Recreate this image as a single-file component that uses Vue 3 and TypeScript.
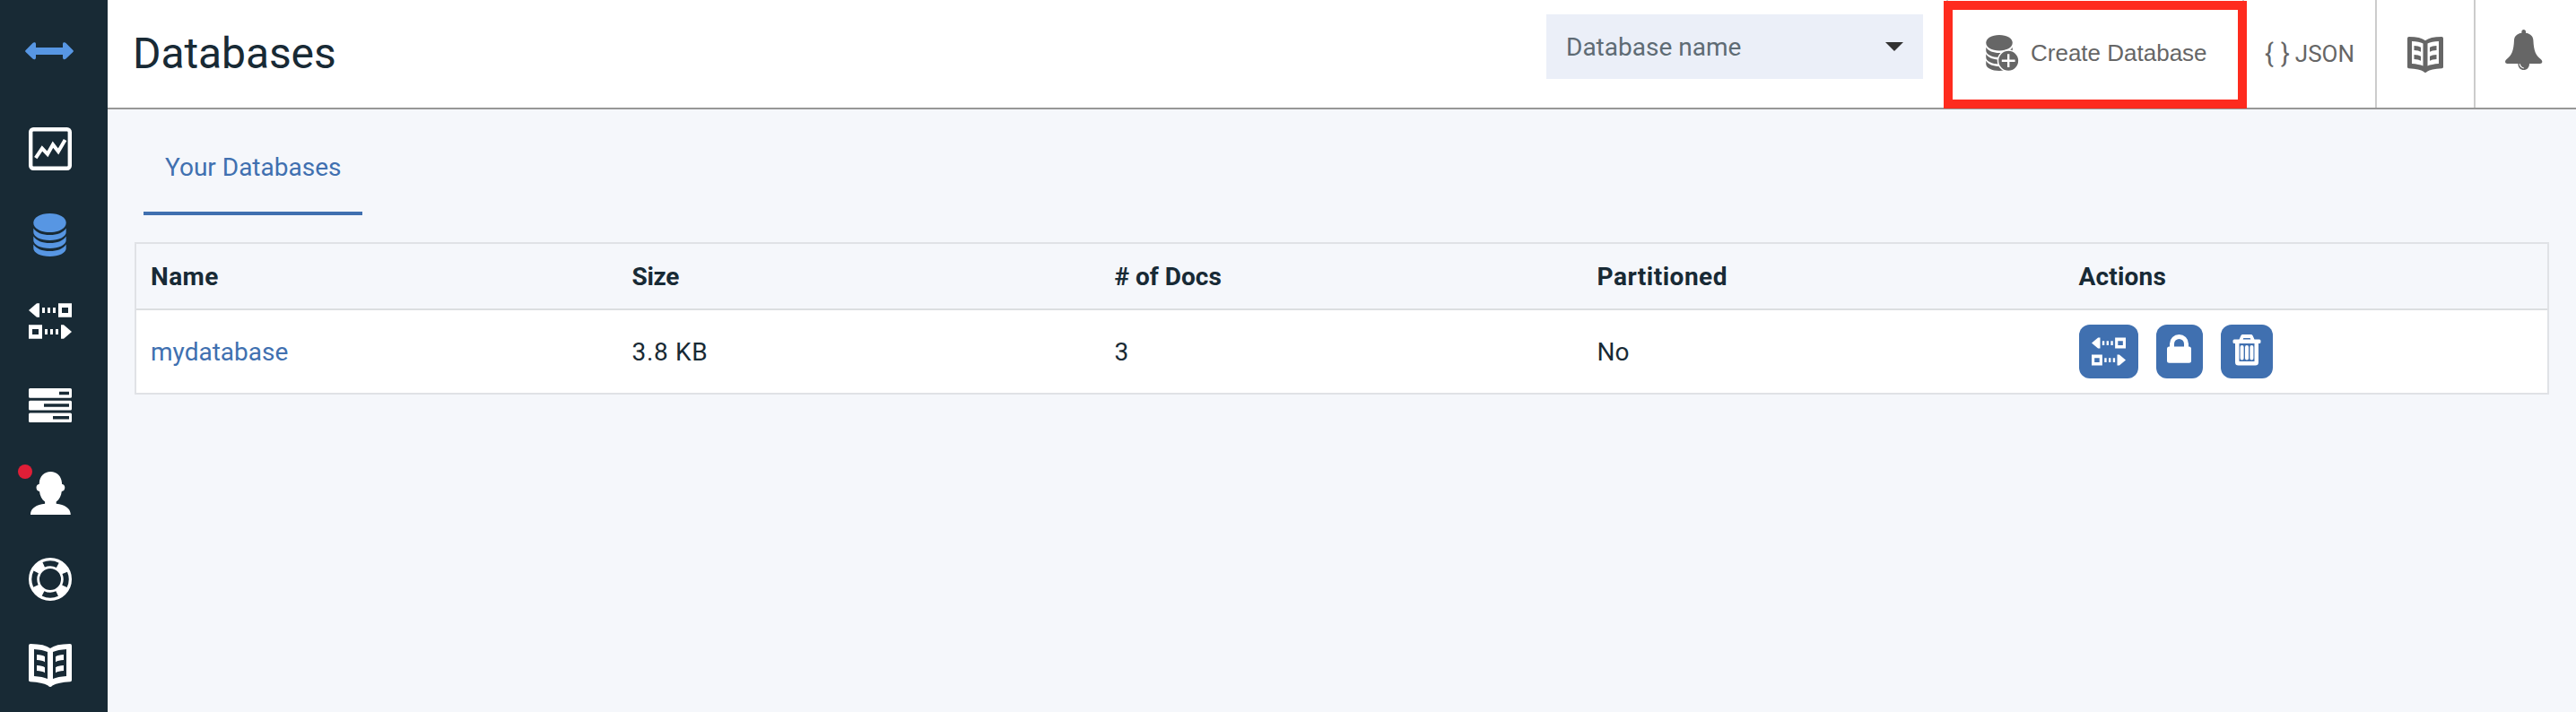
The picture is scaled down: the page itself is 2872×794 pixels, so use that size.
<script setup lang="ts">
interface NavItem {
  id: string
  width: number
  height: number
  active?: boolean
  alert?: boolean
}

interface Database {
  name: string
  size: string
  docs: number
  partitioned: boolean
}

const navItems: NavItem[] = [
  { id: 'monitoring', width: 48, height: 48 },
  { id: 'database', width: 37, height: 48, active: true },
  { id: 'replication', width: 48, height: 40 },
  { id: 'tasks', width: 48, height: 38 },
  { id: 'account', width: 45, height: 48, alert: true },
  { id: 'support', width: 48, height: 48 },
  { id: 'book', width: 48, height: 48 },
]

const databases: Database[] = [
  { name: 'mydatabase', size: '3.8 KB', docs: 3, partitioned: false },
]
</script>

<template>
  <div class="app">
    <svg class="sprite" width="0" height="0" aria-hidden="true">
      <symbol id="monitoring" viewBox="0 0 48 48">
        <rect x="2.2" y="2.2" width="43.6" height="43.6" rx="3" fill="none" stroke="currentColor" stroke-width="4.4" />
        <path d="M7.8 34.2 15 23.5l6 6.3 6-10.6 6 7.8 7.6-13" fill="none" stroke="currentColor" stroke-width="4" />
      </symbol>
      <symbol id="database" viewBox="0 0 37 48">
        <g fill="currentColor">
          <path d="M.3 10.5C.3 4.5 8 0 18.5 0s18.2 4.500 18.200 10.500S29 21 18.500 21 .3 16.500.3 10.500Z" />
          <path d="M.3 16.500C3.500 21.500 10 24 18.500 24s15-2.500 18.200-7.500v4.500C36.700 26 28.500 30 18.500 30S.3 26 .3 21Z" />
          <path d="M.3 25.500C3.500 30.500 10 33 18.500 33s15-2.500 18.200-7.500v4.500C36.700 35 28.500 39 18.500 39S.3 35 .3 30Z" />
          <path d="M.3 34.500C3.500 39.500 10 42 18.500 42s15-2.500 18.200-7.500v4.500C36.700 44 28.500 48 18.500 48S.3 44 .3 39Z" />
        </g>
      </symbol>
      <symbol id="replication" viewBox="0 0 48 40">
        <g fill="currentColor">
          <path d="M0 8 9 .3h3v15.400H9Z" />
          <path d="M15 5h3v6h-3ZM21 5h3v6h-3ZM27 5h3v6h-3Z" />
          <path fill-rule="evenodd" d="M33 .3h15v15.400H33ZM37 5v6h7V5Z" />
          <path fill-rule="evenodd" d="M0 24.300h15v15.400H0ZM4 29v6h7v-6Z" />
          <path d="M18 29h3v6h-3ZM24 29h3v6h-3ZM30 29h3v6h-3Z" />
          <path d="m48 32-9-7.700h-3v15.400h3Z" />
        </g>
      </symbol>
      <symbol id="tasks" viewBox="0 0 48 38">
        <g fill="currentColor" fill-rule="evenodd">
          <path d="M1.500 0h45Q48 0 48 1.500v7.700q0 1.500-1.500 1.500h-45Q0 10.700 0 9.200V1.500Q0 0 1.500 0ZM34 3.700V7.200H45V3.700Z" />
          <path d="M1.500 13.800h45q1.500 0 1.500 1.500v7.700q0 1.500-1.500 1.500h-45Q0 24.500 0 23v-7.700q0-1.500 1.500-1.500ZM17 17.300v3.500H45v-3.500Z" />
          <path d="M1.500 27.400h45q1.500 0 1.500 1.500v7.600q0 1.500-1.500 1.500h-45Q0 38 0 36.500v-7.600q0-1.500 1.500-1.500ZM27 31v3.500H45V31Z" />
        </g>
      </symbol>
      <symbol id="account" viewBox="0 0 45 48">
        <path
          fill="currentColor"
          d="M22.400 0C29.500 0 34.500 5 35 12.500v1.300c2 .3 3.300 1.800 3.300 3.900 0 2.300-1.400 4-3.500 4.300-.5 5-2.800 9.200-6.100 11.500v2.200C38 36.500 44.400 41 44.700 47v1H0v-1C.3 41 6.800 36.500 16.100 35.700v-2.200C12.800 31.200 10.500 27 10 22c-2.100-.3-3.500-2-3.500-4.300 0-2.100 1.300-3.600 3.300-3.900v-1.300C10.300 5 15.300 0 22.400 0Z"
        />
      </symbol>
      <symbol id="support" viewBox="0 0 48 48">
        <circle cx="24" cy="24" r="18" fill="none" stroke="currentColor" stroke-width="12" />
        <circle class="cutout" cx="24" cy="24" r="17.750" fill="none" stroke-width="6" stroke-dasharray="16.100 11.780" stroke-dashoffset="8.050" />
      </symbol>
      <symbol id="book" viewBox="0 0 48 48">
        <g fill="currentColor">
          <path
            fill-rule="evenodd"
            d="M2 0Q18 .2 24 5 30 .2 46 0q2 0 2 2v38.500q0 1.500-1.700 1.700Q31 43.300 26.500 46.500 25 48 24 48t-2.500-1.500Q17 43.300 1.700 42.200 0 42 0 40.500V2Q0 0 2 0ZM6 6v30q9.500.6 15 3V9Q15.500 6.500 6 6ZM42 6q-9.500.5-15 3v30q5.500-2.400 15-3Z"
          />
          <path d="M9 12q6 .2 9 2.200v6Q15 18.200 9 18ZM9 24q6 .2 9 2.200v6Q15 30.200 9 30ZM39 12q-6 .2-9 2.200v6q3-2 9-2.200ZM39 24q-6 .2-9 2.200v6q3-2 9-2.200Z" />
        </g>
      </symbol>
    </svg>

    <nav class="sidebar">
      <a class="brand">
        <svg width="54" height="20" viewBox="0 0 54 20">
          <path
            fill="currentColor"
            d="M.6 8.900 8.500 1Q9.600 0 10.800.3 12 .6 12 2v4h30V2q0-1.400 1.200-1.700Q44.400 0 45.500 1l7.900 7.900q1 1 0 2L45.500 18.500q-1.100 1-2.300.7Q42 18.900 42 17.500V14H12v3.500q0 1.400-1.200 1.700-1.200.3-2.300-.7L.6 10.900q-1-1 0-2Z"
          />
        </svg>
      </a>
      <a v-for="item in navItems" :key="item.id" class="nav-item" :class="[item.id, { active: item.active }]">
        <svg :width="item.width" :height="item.height"><use :href="'#' + item.id" /></svg>
        <span v-if="item.alert" class="alert-dot"></span>
      </a>
    </nav>

    <main class="content">
      <header class="topbar">
        <h1>Databases</h1>
        <div class="db-select">
          <span class="placeholder">Database name</span>
          <i class="caret"></i>
        </div>
        <button class="cell create">
          <svg width="37" height="40" viewBox="0 0 37 40">
            <svg width="30" height="40" viewBox="0 0 37 48" preserveAspectRatio="none"><use href="#database" /></svg>
            <circle cx="25.200" cy="28.700" r="11.700" fill="currentColor" stroke="#fff" stroke-width="1.500" />
            <path d="M17.800 28.700h14.800M25.200 21.300v14.800" stroke="#fff" stroke-width="2.400" />
          </svg>
          <span>Create Database</span>
          <i class="highlight"></i>
        </button>
        <button class="cell json"><span class="braces">{ }</span><span>JSON</span></button>
        <button class="cell docs">
          <svg width="40" height="40"><use href="#book" /></svg>
        </button>
        <button class="cell bell">
          <svg width="42" height="45" viewBox="0 0 42 45">
            <path
              fill="currentColor"
              d="M20.700 0c1.400 0 2.300 1 2.300 2.200v1.600c5 .7 8.200 3.700 8.400 8.200.5 11.500 2.600 16.500 8.300 21 1.500 1.200 1.800 2.400 1.500 3.500-.3 1-1 1.400-2.200 1.400H27c0 4.200-2.700 7.100-6.300 7.100s-6.300-2.900-6.300-7.100h-12C1.200 37.900.5 37.500.2 36.500c-.3-1.100 0-2.300 1.500-3.500C7.400 28.500 9.500 23.500 10 12c.2-4.500 3.400-7.500 8.400-8.200V2.200C18.400 1 19.300 0 20.700 0Z"
            />
            <path d="M16.300 38.300q.5 4 4.500 4.700" fill="none" stroke="#fff" stroke-width="1.200" />
          </svg>
        </button>
      </header>

      <section class="page">
        <div class="tabs"><a class="tab">Your Databases</a></div>

        <div class="table">
          <div class="row head">
            <span class="name">Name</span>
            <span class="size">Size</span>
            <span># of Docs</span>
            <span class="part">Partitioned</span>
            <span class="acts">Actions</span>
          </div>
          <div v-for="db in databases" :key="db.name" class="row">
            <a class="link">{{ db.name }}</a>
            <span class="num">{{ db.size }}</span>
            <span>{{ db.docs }}</span>
            <span>{{ db.partitioned ? 'Yes' : 'No' }}</span>
            <div class="actions">
              <button class="action replicate">
                <svg width="38" height="32"><use href="#replication" /></svg>
              </button>
              <button class="action lock">
                <svg width="27" height="32" viewBox="0 0 27 32">
                  <path d="M5.500 16V10.500a8 8 0 0 1 16 0V16" fill="none" stroke="#fff" stroke-width="5" />
                  <rect y="13.500" width="27" height="18.300" rx="2.500" fill="#fff" />
                </svg>
              </button>
              <button class="action trash">
                <svg width="32" height="35" viewBox="0 0 32 35">
                  <path
                    fill="#fff"
                    fill-rule="evenodd"
                    d="M11.500 0h9q1.500 0 2.200 1.400L24.500 5.500H30q1.500 0 1.500 1.500v1.500q0 1.500-1.500 1.500h-1V31q0 3.500-3.500 3.500h-19Q3 34.500 3 31V10H2Q.5 10 .5 8.500V7Q.5 5.500 2 5.500H7.500L9.300 1.400Q10 0 11.500 0ZM12.300 4 11.700 5.500h8.600L19.700 4ZM7.500 10V30H24.500V10Z"
                  />
                  <path d="M10.600 14v12.500M16 14v12.500M21.400 14v12.500" stroke="#fff" stroke-width="4" stroke-linecap="round" />
                </svg>
              </button>
            </div>
          </div>
        </div>
      </section>
    </main>
  </div>
</template>

<style>
body {
  margin: 0;
  background: #f5f7fb;
}
</style>

<style scoped>
.app {
  display: flex;
  height: 794px;
  overflow: hidden;
  font: 28px/36px Roboto, "Liberation Sans", sans-serif;
  color: #182a35;
  background: #f5f7fb;
}

.sprite {
  position: absolute;
}

svg {
  display: block;
}

button {
  margin: 0;
  padding: 0;
  border: 0;
  background: none;
  font: inherit;
  color: inherit;
}

.sidebar {
  flex: 0 0 120px;
  background: #182a35;
  color: #fff;
}

.brand {
  display: flex;
  height: 71px;
  padding: 47px 0 0 28px;
  color: #5796e3;
}

.nav-item {
  position: relative;
  display: flex;
  align-items: center;
  justify-content: center;
  box-sizing: border-box;
  height: 96px;
  padding-right: 8px;
}

.nav-item.active {
  color: #5796e3;
  padding-right: 9px;
}

.nav-item.tasks {
  padding-bottom: 4px;
}

.cutout {
  stroke: #182a35;
}

.alert-dot {
  position: absolute;
  left: 20px;
  top: 16px;
  width: 16px;
  height: 16px;
  border-radius: 50%;
  background: #e01e37;
}

.content {
  flex: 1;
  min-width: 0;
}

.topbar {
  display: flex;
  height: 120px;
  background: #fff;
  border-bottom: 2px solid #979797;
}

h1 {
  flex: 1;
  margin: 0;
  padding-left: 28px;
  font-size: 48px;
  line-height: 119px;
  font-weight: 400;
  letter-spacing: -0.1px;
}

.db-select {
  display: flex;
  align-items: center;
  justify-content: space-between;
  width: 376px;
  height: 72px;
  margin: 16px 26px 0 0;
  padding: 0 22px;
  background: #ebeff8;
  color: #5e6b74;
}

.placeholder {
  padding-top: 2px;
}

.caret {
  border: 10px solid transparent;
  border-top-color: #323232;
  border-bottom: 0;
}

.cell {
  display: flex;
  align-items: center;
  box-sizing: border-box;
  height: 120px;
  border-left: 2px solid #ccc;
  color: #666;
}

.create {
  position: relative;
  width: 330px;
  padding: 0 0 2px 42px;
  gap: 13px;
  font: 26px/32px "Liberation Sans", Arial, sans-serif;
  white-space: nowrap;
}

.highlight {
  position: absolute;
  left: -5px;
  top: 1px;
  width: 318px;
  height: 100px;
  border: 10px solid #fe2b1e;
}

.json {
  width: 148px;
  padding: 0 0 1px 23px;
  gap: 6px;
  font-size: 26px;
}

.braces {
  font-size: 29px;
  word-spacing: 1px;
  line-height: 32px;
  white-space: nowrap;
}

.docs {
  width: 110px;
  padding: 2px 0 0 34px;
}

.bell {
  width: 114px;
  padding: 0 0 9px 33px;
}

.page {
  padding: 24px 30px 0;
}

.tabs {
  display: flex;
  padding-left: 10px;
}

.tab {
  width: 220px;
  height: 90px;
  padding-left: 24px;
  border-bottom: 4px solid #4070b0;
  color: #4070b0;
  line-height: 82px;
  white-space: nowrap;
}

.table {
  margin-top: 30px;
  border: 2px solid #e0e2e6;
}

.row {
  display: grid;
  grid-template-columns: 536.500px 538px 538px 537px 1fr;
  align-items: center;
  height: 92px;
  padding-left: 16px;
  background: #fff;
}

.row > span,
.link {
  padding-top: 2px;
}

.head {
  height: 72px;
  border-bottom: 2px solid #dcdee0;
  background: #f5f7fb;
  font-weight: 700;
}

.name {
  letter-spacing: 0.4px;
}

.size {
  letter-spacing: -0.3px;
}

.part {
  letter-spacing: 0.5px;
}

.acts {
  letter-spacing: 0.2px;
}

.link {
  color: #4070b0;
}

.num {
  letter-spacing: 0.7px;
}

.actions {
  display: flex;
  gap: 20px;
}

.action {
  display: flex;
  justify-content: center;
  box-sizing: border-box;
  height: 60px;
  border-radius: 12px;
  background: #4070b0;
  color: #fff;
}

.replicate {
  width: 66px;
  padding-top: 14px;
}

.lock {
  width: 52px;
  padding-top: 11px;
}

.trash {
  width: 58px;
  padding-top: 11px;
}
</style>
